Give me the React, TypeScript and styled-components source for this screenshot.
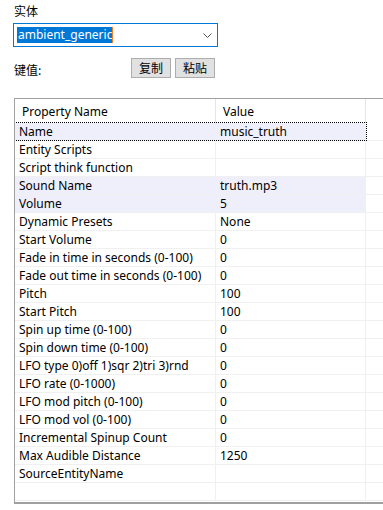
import styled, { createGlobalStyle } from 'styled-components';

const GlobalStyle = createGlobalStyle`
  html, body {
    margin: 0;
    padding: 0;
    background: #fff;
    overflow: hidden;
  }
  body {
    font-family: "Noto Sans", "Noto Sans CJK SC", sans-serif;
    font-size: 12px;
    color: #000;
  }
`;

const Page = styled.div`
  width: 383px;
  height: 510px;
  padding: 3px 0 0 13px;
  box-sizing: border-box;
  overflow: hidden;
`;

const Label = styled.div`
  font-family: "Noto Sans CJK SC", sans-serif;
  font-size: 12px;
  line-height: 16px;
  height: 16px;
  margin-left: 1px;
`;

const Combo = styled.div`
  margin-top: 4px;
  width: 205px;
  height: 24px;
  box-sizing: border-box;
  border: 1px solid #0078d7;
  display: flex;
  align-items: center;
  padding: 0 5px 0 3px;
`;

const ComboText = styled.span`
  flex: 1;
  display: flex;
  align-items: center;
`;

const Selected = styled.span`
  background: #0078d7;
  color: #fff;
  font-family: "Noto Sans", sans-serif;
  font-size: 12px;
  line-height: 16px;
  padding: 0 0 0 1px;
  border-right: 1px solid #f07d1e;
`;

const Chevron = styled.svg`
  width: 9px;
  height: 5px;
`;

const KeyRow = styled.div`
  margin-top: 11px;
  display: flex;
  align-items: center;
  width: 205px;
`;

const KeyLabel = styled(Label)`
  flex: 1;
  margin-top: 4px;
`;

const Buttons = styled.div`
  display: flex;
  gap: 4px;
  margin-right: 3px;
`;

const Button = styled.button`
  width: 40px;
  height: 20px;
  box-sizing: border-box;
  border: 1px solid #adadad;
  background: #e1e1e1;
  font-family: "Noto Sans CJK SC", sans-serif;
  font-size: 12px;
  line-height: 16px;
  padding: 0;
  color: #000;
`;

const List = styled.div`
  margin: 20px -20px 0 1px;
  border-top: 1px solid #a0a0a0;
  border-left: 1px solid #a0a0a0;
  border-bottom: 2px solid #a0a0a0;
  height: 406px;
  box-sizing: border-box;
  overflow: hidden;
`;

const Header = styled.div`
  display: flex;
  height: 24px;
  align-items: stretch;
`;

const HeaderCell = styled.div<{ $w: number }>`
  width: ${(p) => p.$w}px;
  flex: none;
  box-sizing: border-box;
  border-right: 1px solid #e5e5e5;
  padding-left: 7px;
  display: flex;
  align-items: center;
`;

const Row = styled.div`
  display: flex;
  height: 18px;
  box-sizing: border-box;
  border-bottom: 1px solid #f0f0f0;
`;

const RowBody = styled.div<{ $selected?: boolean; $focused?: boolean }>`
  display: flex;
  background: ${(p) => (p.$selected ? '#efeffc' : 'transparent')};
  outline: ${(p) => (p.$focused ? '1px dotted #000' : 'none')};
`;

const Cell = styled.div<{ $w: number }>`
  width: ${(p) => p.$w}px;
  flex: none;
  box-sizing: border-box;
  border-right: 1px solid #f0f0f0;
  padding-left: 4px;
  line-height: 17px;
  white-space: nowrap;
  overflow: hidden;
`;

const Filler = styled.div`
  flex: 1;
`;

type Prop = { name: string; value: string; selected?: boolean; focused?: boolean };

const props: Prop[] = [
  { name: 'Name', value: 'music_truth', selected: true, focused: true },
  { name: 'Entity Scripts', value: '' },
  { name: 'Script think function', value: '' },
  { name: 'Sound Name', value: 'truth.mp3', selected: true },
  { name: 'Volume', value: '5', selected: true },
  { name: 'Dynamic Presets', value: 'None' },
  { name: 'Start Volume', value: '0' },
  { name: 'Fade in time in seconds (0-100)', value: '0' },
  { name: 'Fade out time in seconds (0-100)', value: '0' },
  { name: 'Pitch', value: '100' },
  { name: 'Start Pitch', value: '100' },
  { name: 'Spin up time (0-100)', value: '0' },
  { name: 'Spin down time (0-100)', value: '0' },
  { name: 'LFO type 0)off 1)sqr 2)tri 3)rnd', value: '0' },
  { name: 'LFO rate (0-1000)', value: '0' },
  { name: 'LFO mod pitch (0-100)', value: '0' },
  { name: 'LFO mod vol (0-100)', value: '0' },
  { name: 'Incremental Spinup Count', value: '0' },
  { name: 'Max Audible Distance', value: '1250' },
  { name: 'SourceEntityName', value: '' },
  { name: '', value: '' },
];

export default function App() {
  return (
    <Page>
      <GlobalStyle />
      <Label>实体</Label>
      <Combo>
        <ComboText>
          <Selected>ambient_generic</Selected>
        </ComboText>
        <Chevron viewBox="0 0 9 5">
          <path d="M0.5 0.5 L4.5 4.5 L8.5 0.5" fill="none" stroke="#555" strokeWidth="1" />
        </Chevron>
      </Combo>
      <KeyRow>
        <KeyLabel>键值:</KeyLabel>
        <Buttons>
          <Button>复制</Button>
          <Button>粘贴</Button>
        </Buttons>
      </KeyRow>
      <List>
        <Header>
          <HeaderCell $w={201}>Property Name</HeaderCell>
          <HeaderCell $w={150}>Value</HeaderCell>
          <Filler />
        </Header>
        {props.map((p, i) => (
          <Row key={i}>
            <RowBody $selected={p.selected} $focused={p.focused}>
              <Cell $w={201}>{p.name}</Cell>
              <Cell $w={150}>{p.value}</Cell>
            </RowBody>
            <Filler />
          </Row>
        ))}
      </List>
    </Page>
  );
}
